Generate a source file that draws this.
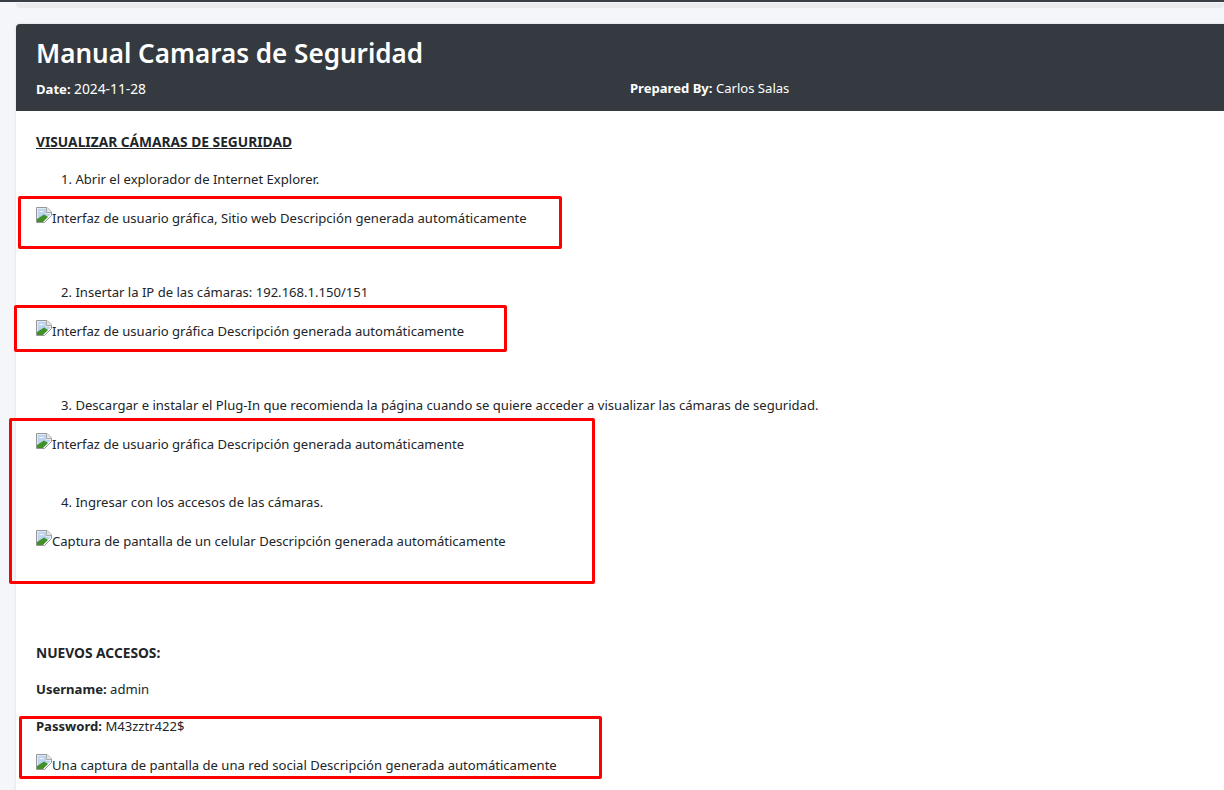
<template>
  <div class="page">
    <svg class="defs" aria-hidden="true">
      <symbol id="broken" viewBox="0 0 16 16">
        <path d="M.5.500h10.500l4.500 4.500v3.500L8.500 15.500H.5z" fill="#fff" stroke="#969696"/>
        <path d="M10.500.500v5h5" fill="#e6e6e6" stroke="#a8a8a8"/>
        <path d="M1.500 1.500h8.500v5h4.500V8l-3 2-3-1.500-7 5z" fill="#bcd4f0"/>
        <path d="M3 5c1-1.500 3.500-1.500 5 0H3z" fill="#fff"/>
        <path d="M1 15v-3L8 7.500 12 10l-5 5z" fill="#3f9128"/>
      </symbol>
    </svg>
    <div class="topbar"></div>
    <div class="prev-card"></div>
    <main class="card">
      <header class="head">
        <h1>Manual Camaras de Seguridad</h1>
        <div class="meta">
          <div><strong>Date:</strong> <span class="date">2024-11-28</span></div>
          <div><strong>Prepared By:</strong> Carlos Salas</div>
        </div>
      </header>
      <section class="body">
        <p class="caps first"><strong><u>VISUALIZAR CÁMARAS DE SEGURIDAD</u></strong></p>
        <p class="step">1. Abrir el explorador de Internet Explorer.</p>
        <p class="pic"><svg class="broken"><use href="#broken"/></svg>Interfaz de usuario gráfica, Sitio web Descripción generada automáticamente</p>
        <p class="blank"></p>
        <p class="step">2. Insertar la IP de las cámaras: 192.168.1.150/151</p>
        <p class="pic"><svg class="broken"><use href="#broken"/></svg>Interfaz de usuario gráfica Descripción generada automáticamente</p>
        <p class="blank"></p>
        <p class="step">3. Descargar e instalar el Plug-In que recomienda la página cuando se quiere acceder a visualizar las cámaras de seguridad.</p>
        <p class="pic"><svg class="broken"><use href="#broken"/></svg>Interfaz de usuario gráfica Descripción generada automáticamente</p>
        <p class="step after-pic">4. Ingresar con los accesos de las cámaras.</p>
        <p class="pic"><svg class="broken"><use href="#broken"/></svg>Captura de pantalla de un celular Descripción generada automáticamente</p>
        <p class="blank tall"></p>
        <p class="blank tall"></p>
        <p class="caps"><strong>NUEVOS ACCESOS:</strong></p>
        <p><strong>Username:</strong> admin</p>
        <p><strong>Password:</strong> M43zztr422$</p>
        <p class="pic"><svg class="broken"><use href="#broken"/></svg>Una captura de pantalla de una red social Descripción generada automáticamente</p>
      </section>
    </main>
    <div class="mark m1"></div>
    <div class="mark m2"></div>
    <div class="mark m3"></div>
    <div class="mark m4"></div>
  </div>
</template>

<style>
html, body { margin: 0; overflow: hidden; }
</style>

<style scoped>
.page {
  position: relative;
  width: 1224px;
  height: 790px;
  overflow: hidden;
  background: #f4f6fa;
  font-family: "Noto Sans", "Open Sans", sans-serif;
  font-size: 13.08px;
  line-height: 21px;
  color: #212529;
}
.defs { position: absolute; width: 0; height: 0; }
.topbar { height: 2px; background: #3a3f47; border-bottom: 1px solid #f4f6fa; }
.prev-card {
  height: 5px;
  margin-left: 16px;
  background: #e9ebee;
  border-radius: 0 0 4px 4px;
}
.card {
  width: 1228px;
  min-height: 780px;
  margin: 16px 0 0 16px;
  background: #fff;
  border-radius: 4px 4px 0 0;
  box-shadow: 0 0 3px rgba(0, 0, 0, .12);
  overflow: hidden;
}
.head {
  height: 87px;
  box-sizing: border-box;
  padding: 12px 20px 0;
  background: #343a40;
  color: #fff;
}
h1 {
  margin: 0 0 7px;
  font-size: 26.05px;
  line-height: 35px;
  font-weight: 600;
}
.meta { display: grid; grid-template-columns: 594px 594px; }
.date { font-size: 13.8px; }
.body { padding: 20px 20px 0; }
p { margin: 0 0 16px; }
strong { font-weight: 700; }
.caps { font-size: 13.75px; }
.caps.first { line-height: 22px; }
.step { padding-left: 25px; }
.pic { height: 25px; line-height: 25px; white-space: nowrap; }
.blank { height: 19px; }
.blank.tall { height: 20px; }
.after-pic { margin-top: 35px; }
.broken { width: 16px; height: 16px; vertical-align: baseline; }
.mark {
  position: absolute;
  box-sizing: border-box;
  border: 3px solid #fe0000;
  border-radius: 2px;
}
.m1 { left: 18px; top: 196px; width: 544px; height: 53px; }
.m2 { left: 14px; top: 305px; width: 493px; height: 47px; }
.m3 { left: 9px; top: 418px; width: 586px; height: 166px; }
.m4 { left: 19px; top: 716px; width: 583px; height: 63px; }
</style>
